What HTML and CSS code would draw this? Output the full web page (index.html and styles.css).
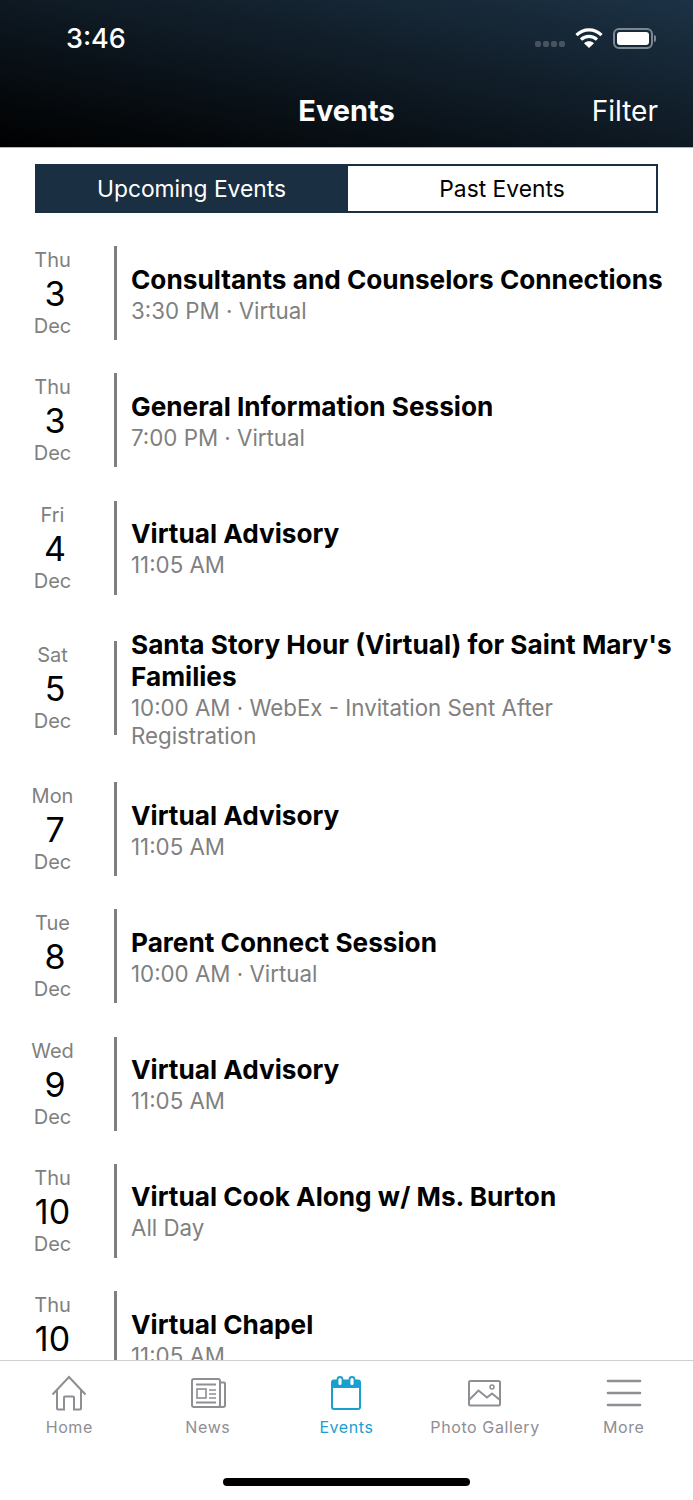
FILE: index.html
```html
<!DOCTYPE html>
<html lang="en">
<head>
    <meta charset="UTF-8">
    <meta name="viewport" content="width=device-width, initial-scale=1.0">
    <title>Events</title>
    <link rel="stylesheet" href="styles.css">
</head>
<body>
<div class="screen">

    <header class="header">
        <div class="status-bar">
            <span class="clock">3:46</span>
            <div class="status-icons">
                <div class="signal"><i></i><i></i><i></i><i></i></div>
                <svg class="wifi" width="28" height="22" viewBox="0 0 28 22">
                    <path d="M1.5 8.2C8.5 1.2 19.5 1.2 26.5 8.2" fill="none" stroke="#fff" stroke-width="3.2"/>
                    <path d="M6 12.6C10.5 8.3 17.5 8.3 22 12.6" fill="none" stroke="#fff" stroke-width="3.2"/>
                    <path d="M9 16.2L14 21L19 16.2C16 13.6 12 13.6 9 16.2Z" fill="#fff"/>
                </svg>
                <div class="battery"><div class="battery-fill"></div></div>
                <div class="battery-cap"></div>
            </div>
        </div>
        <nav class="navbar">
            <span></span>
            <h1 class="nav-title">Events</h1>
            <a class="nav-filter">Filter</a>
        </nav>
    </header>

    <div class="segments">
        <div class="segment active">Upcoming Events</div>
        <div class="segment">Past Events</div>
    </div>

    <main class="event-list">
        <div class="event">
            <div class="date"><span class="weekday">Thu</span><span class="day one-digit">3</span><span class="month">Dec</span></div>
            <div class="bar"></div>
            <div class="info">
                <div class="title">Consultants and Counselors Connections</div>
                <div class="meta">3:30 PM · Virtual</div>
            </div>
        </div>
        <div class="event">
            <div class="date"><span class="weekday">Thu</span><span class="day one-digit">3</span><span class="month">Dec</span></div>
            <div class="bar"></div>
            <div class="info">
                <div class="title">General Information Session</div>
                <div class="meta">7:00 PM · Virtual</div>
            </div>
        </div>
        <div class="event">
            <div class="date"><span class="weekday">Fri</span><span class="day one-digit">4</span><span class="month">Dec</span></div>
            <div class="bar"></div>
            <div class="info">
                <div class="title">Virtual Advisory</div>
                <div class="meta">11:05 AM</div>
            </div>
        </div>
        <div class="event">
            <div class="date"><span class="weekday">Sat</span><span class="day one-digit">5</span><span class="month">Dec</span></div>
            <div class="bar"></div>
            <div class="info">
                <div class="title">Santa Story Hour (Virtual) for Saint Mary's Families</div>
                <div class="meta">10:00 AM · WebEx - Invitation Sent After Registration</div>
            </div>
        </div>
        <div class="event">
            <div class="date"><span class="weekday">Mon</span><span class="day one-digit">7</span><span class="month">Dec</span></div>
            <div class="bar"></div>
            <div class="info">
                <div class="title">Virtual Advisory</div>
                <div class="meta">11:05 AM</div>
            </div>
        </div>
        <div class="event">
            <div class="date"><span class="weekday">Tue</span><span class="day one-digit">8</span><span class="month">Dec</span></div>
            <div class="bar"></div>
            <div class="info">
                <div class="title">Parent Connect Session</div>
                <div class="meta">10:00 AM · Virtual</div>
            </div>
        </div>
        <div class="event">
            <div class="date"><span class="weekday">Wed</span><span class="day one-digit">9</span><span class="month">Dec</span></div>
            <div class="bar"></div>
            <div class="info">
                <div class="title">Virtual Advisory</div>
                <div class="meta">11:05 AM</div>
            </div>
        </div>
        <div class="event">
            <div class="date"><span class="weekday">Thu</span><span class="day">10</span><span class="month">Dec</span></div>
            <div class="bar"></div>
            <div class="info">
                <div class="title">Virtual Cook Along w/ Ms. Burton</div>
                <div class="meta">All Day</div>
            </div>
        </div>
        <div class="event">
            <div class="date"><span class="weekday">Thu</span><span class="day">10</span><span class="month">Dec</span></div>
            <div class="bar"></div>
            <div class="info">
                <div class="title">Virtual Chapel</div>
                <div class="meta">11:05 AM</div>
            </div>
        </div>
    </main>

    <footer class="tabbar">
        <div class="tabs">
            <div class="tab">
                <svg width="40" height="36" viewBox="0 0 40 36" fill="none" stroke="#8e8e93" stroke-width="2">
                    <path d="M3.5 19.5L20 2L36.5 19.5"/>
                    <path d="M8 15V33.5C8 34.3 8.4 34.5 9 34.5H15V22.5C15 21.8 15.3 21.5 16 21.5H24C24.7 21.5 25 21.8 25 22.5V34.5H31C31.6 34.5 32 34.3 32 33.5V15"/>
                </svg>
                <span>Home</span>
            </div>
            <div class="tab">
                <svg width="40" height="36" viewBox="0 0 40 36" fill="none" stroke="#8e8e93">
                    <rect x="4" y="4" width="28" height="28" rx="2" stroke-width="2"/>
                    <path d="M33 7.5H36C36.6 7.5 37 8 37 8.5V30C37 31.2 36 32 35 32H30" stroke-width="2"/>
                    <path d="M8 9.5H28" stroke-width="2"/>
                    <rect x="9" y="14" width="9" height="9" stroke-width="1.6"/>
                    <path d="M21 15H28M21 19H28M21 23H28" stroke-width="1.5"/>
                    <path d="M8 27.5H28" stroke-width="2"/>
                </svg>
                <span>News</span>
            </div>
            <div class="tab current">
                <svg width="40" height="36" viewBox="0 0 40 36" fill="none">
                    <rect x="6" y="5.5" width="28" height="28.5" rx="2" stroke="#19a0cf" stroke-width="2"/>
                    <rect x="6" y="5" width="28" height="8" rx="2" fill="#19a0cf"/>
                    <rect x="11.5" y="2" width="5" height="9" rx="2.5" fill="#fff" stroke="#19a0cf" stroke-width="1.8"/>
                    <rect x="23.5" y="2" width="5" height="9" rx="2.5" fill="#fff" stroke="#19a0cf" stroke-width="1.8"/>
                </svg>
                <span>Events</span>
            </div>
            <div class="tab">
                <svg width="40" height="36" viewBox="0 0 40 36" fill="none" stroke="#8e8e93" stroke-width="2">
                    <rect x="4" y="6" width="31" height="24.5" rx="1.5"/>
                    <path d="M4 25L13.5 15.5L22 22.5L27 18.5L35 25" />
                    <circle cx="27" cy="12" r="2" stroke-width="1.5"/>
                </svg>
                <span>Photo Gallery</span>
            </div>
            <div class="tab">
                <svg width="40" height="36" viewBox="0 0 40 36" fill="none" stroke="#8e8e93" stroke-width="2.6" stroke-linecap="round">
                    <path d="M4 6H36M4 18H36M4 30H36"/>
                </svg>
                <span>More</span>
            </div>
        </div>
        <div class="home-indicator"></div>
    </footer>

</div>
</body>
</html>
```

FILE: styles.css
```css
* {
    box-sizing: border-box;
}

body {
    margin: 0;
    padding: 0;
    background: #fff;
    font-family: Inter, "Liberation Sans", sans-serif;
}

.screen {
    width: 693px;
    height: 1500px;
    display: flex;
    flex-direction: column;
    overflow: hidden;
}

/* Header */
.header {
    height: 148px;
    flex-shrink: 0;
    color: white;
    background: linear-gradient(to bottom left, #1c3245, #000);
    border-bottom: 1px solid #b5b5b5;
}

.status-bar {
    height: 76px;
    padding: 0 37px 0 66px;
    display: flex;
    justify-content: space-between;
    align-items: center;
}

.clock {
    font-size: 27px;
    font-weight: 500;
}

.status-icons {
    display: flex;
    align-items: center;
}

.signal {
    display: flex;
    gap: 2px;
    margin: 12px 10px 0 0;
}

.signal i {
    width: 6px;
    height: 6px;
    border-radius: 2px;
    background: #47545f;
}

.wifi {
    margin-right: 10px;
}

.battery {
    height: 21px;
    padding: 2px;
    width: 40px;
    border: 2px solid #7b8791;
    border-radius: 6px;
}

.battery-fill {
    height: 100%;
    background: white;
    border-radius: 3px;
}

.battery-cap {
    width: 2px;
    height: 7px;
    margin-left: 1px;
    background: #7b8791;
    border-radius: 0 2px 2px 0;
}

.navbar {
    display: grid;
    grid-template-columns: 1fr auto 1fr;
    align-items: center;
    padding: 0 35px;
    height: 70px;
}

.nav-title {
    margin: 0 0 2px;
    font-size: 29px;
    font-weight: 700;
}

.nav-filter {
    text-align: right;
    font-size: 28px;
}

/* Upcoming / Past switch */
.segments {
    display: flex;
    flex-shrink: 0;
    height: 49px;
    margin: 16px 35px 33px;
    border: 2px solid #1b2f42;
}

.segment {
    flex: 1;
    display: flex;
    justify-content: center;
    align-items: center;
    font-size: 22.8px;
    color: black;
}

.segment.active {
    flex: 0 0 311px;
    padding-right: 2px;
    background: #1b2f42;
    color: white;
}

/* Event rows */
.event-list {
    flex: 1;
    min-height: 0;
    overflow: hidden;
    display: flex;
    flex-direction: column;
    gap: 33.25px;
}

.event {
    display: flex;
    align-items: center;
    flex-shrink: 0;
    min-height: 94px;
}

.date {
    width: 105px;
    display: flex;
    flex-direction: column;
    align-items: center;
    color: #808080;
    font-size: 20px;
    line-height: 26px;
}

.day {
    font-size: 34px;
    line-height: 40px;
    margin-top: 1px;
    color: black;
}

.day.one-digit {
    padding-left: 5px;
}

.month {
    margin-top: -1px;
}

.bar {
    width: 3px;
    height: 94px;
    margin: 0 14px 0 9px;
    background: #7f7f7f;
}

.info {
    flex: 1;
    min-width: 0;
    margin: 1px 0 -1px;
    padding-right: 18px;
}

.title {
    font-size: 26.2px;
    line-height: 32px;
    font-weight: 700;
    color: black;
}

.meta {
    margin-top: 1px;
    font-size: 22.3px;
    line-height: 28px;
    color: #808080;
}

/* Bottom tabs */
.tabbar {
    height: 140px;
    flex-shrink: 0;
    background: white;
    border-top: 1px solid #cfcfd2;
    display: flex;
    flex-direction: column;
    align-items: center;
}

.tabs {
    width: 100%;
    display: flex;
    padding-top: 14px;
}

.tab {
    flex: 1;
    display: flex;
    flex-direction: column;
    align-items: center;
    color: #8e8e93;
    font-size: 16px;
    letter-spacing: 0.6px;
}

.tab span {
    margin-top: 6px;
}

.tab.current {
    color: #19a0cf;
}

.home-indicator {
    width: 247px;
    height: 8px;
    margin-top: 41px;
    border-radius: 4px;
    background: black;
}
```
